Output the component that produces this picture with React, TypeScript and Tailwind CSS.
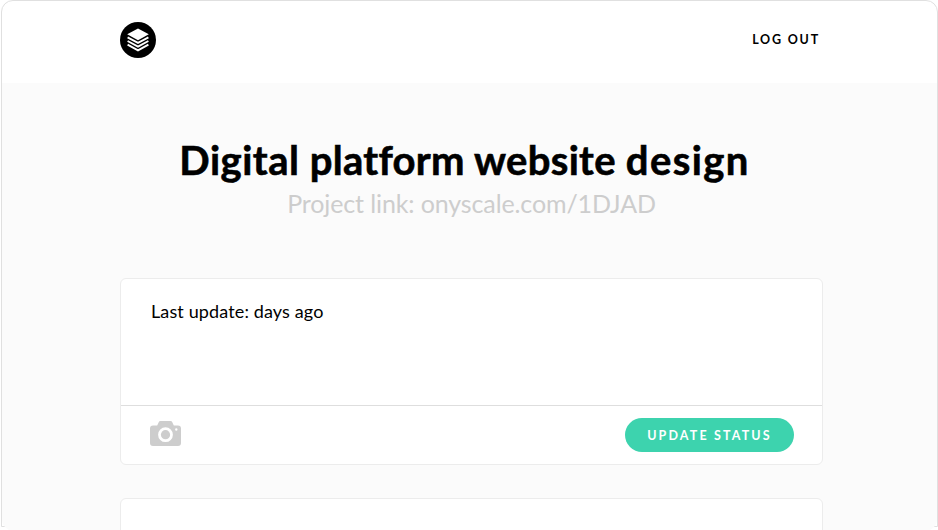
function Logo() {
  return (
    <svg className="block size-9" viewBox="0 0 36 36" fill="none">
      <circle cx="18" cy="18" r="18" fill="#000" />
      <path d="M18 6.6 28.8 12.3 18 18.2 7.2 12.3Z" fill="#fff" />
      <path
        d="M7.6 15.3 18 20.9l10.4-5.6M7.6 19 18 24.6 28.4 19M7.6 22.7 18 28.3l10.4-5.6"
        stroke="#fff"
        strokeWidth="1.9"
      />
    </svg>
  );
}

function Camera() {
  return (
    <svg className="-mt-[3px] block h-[25px] w-[31px]" viewBox="0 0 31 25">
      <path
        fillRule="evenodd"
        fill="#cdcdcd"
        d="M3 4.5H7.2L8.7 1.2Q9.2 0 10.5 0H20.5Q21.8 0 22.3 1.2L23.8 4.5H28Q31 4.5 31 7.5V22Q31 25 28 25H3Q0 25 0 22V7.5Q0 4.5 3 4.5ZM15.5 6.3a7.4 7.4 0 1 0 0 14.8 7.4 7.4 0 0 0 0-14.8ZM26.3 7.3a1.2 1.2 0 1 0 0 2.4 1.2 1.2 0 0 0 0-2.4Z"
      />
      <circle cx="15.5" cy="13.7" r="4.6" fill="#cdcdcd" />
    </svg>
  );
}

export default function App() {
  return (
    <div className="h-[530px] w-[938px] overflow-hidden bg-white pl-px font-['Lato',sans-serif] text-black">
      <div className="h-[527px] rounded-t-xl border border-[#e0e0e0]">
        <header className="flex h-[82px] items-start justify-between pr-[117px] pl-[118px] pt-[21px]">
          <Logo />
          <a className="mt-2 text-[12.5px] leading-[20px] font-bold tracking-[1.8px] whitespace-nowrap">LOG OUT</a>
        </header>
        <main className="h-[448px] overflow-hidden rounded-b-xl bg-[#fbfbfb] pl-[118px]">
          <div className="w-[703px] pt-[52px]">
            <h1 className="-ml-[14px] text-center text-[40px] leading-[50px] font-bold tracking-[0.6px] whitespace-nowrap [-webkit-text-stroke:0.6px_#000]">
              <span className="tracking-[0.5px]">Digital </span>
              <span className="tracking-[0.3px]">platform </span>
              <span className="tracking-[0.3px]">website </span>
              <span className="tracking-[1.4px]">design</span>
            </h1>
            <p className="text-center text-[25px] leading-[36px] tracking-[-0.12px] whitespace-nowrap text-[#cdcdcd]">
              Project link: onyscale.com/1DJAD
            </p>
            <section className="mt-[57px] h-[187px] rounded-md border border-[#ececec] bg-white">
              <div className="h-[127px] border-b border-[#dedede] pt-[19px] pl-[30px] text-[18px] leading-[26px] tracking-[0.13px]">
                Last update: days ago
              </div>
              <div className="flex h-[58px] items-center justify-between pr-[28px] pl-[29px]">
                <Camera />
                <button className="h-[34px] w-[169px] rounded-full bg-[#3dd3ae] pt-[2px] text-[12.5px] font-bold tracking-[2.15px] whitespace-nowrap text-white">
                  UPDATE STATUS
                </button>
              </div>
            </section>
            <section className="mt-[33px] h-[60px] rounded-md border border-[#ececec] bg-white" />
          </div>
        </main>
      </div>
    </div>
  );
}
